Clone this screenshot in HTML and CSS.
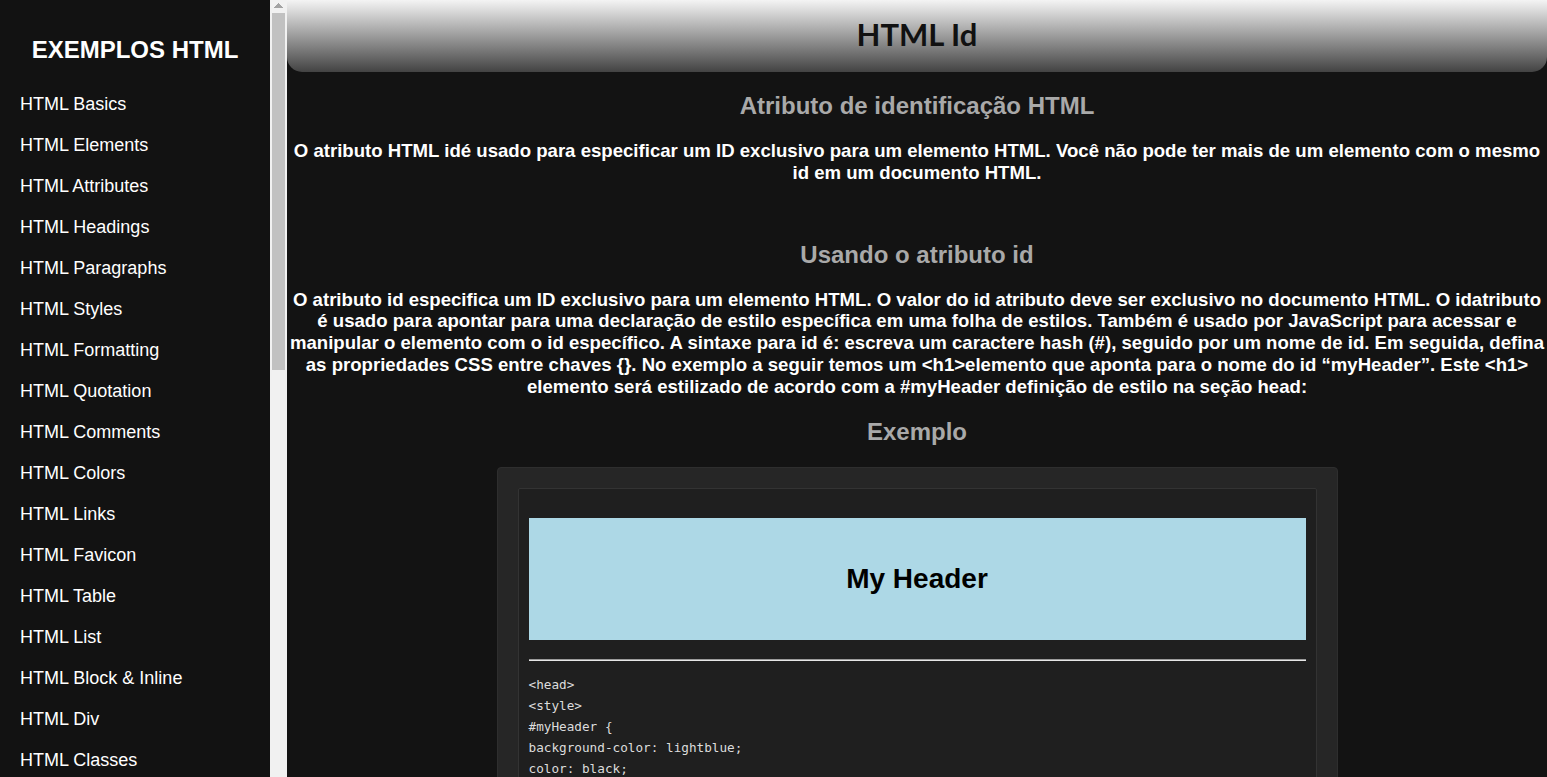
FILE: index.html
```html
<!DOCTYPE html>
<html lang="pt-BR">
<head>
<meta charset="utf-8">
<title>HTML Id</title>
<link rel="stylesheet" href="styles.css">
</head>
<body>
<aside class="sidebar">
  <nav class="side-nav">
    <h1 class="side-title">EXEMPLOS HTML</h1>
    <ul class="side-list">
      <li><a href="#">HTML Basics</a></li>
      <li><a href="#">HTML Elements</a></li>
      <li><a href="#">HTML Attributes</a></li>
      <li><a href="#">HTML Headings</a></li>
      <li><a href="#">HTML Paragraphs</a></li>
      <li><a href="#">HTML Styles</a></li>
      <li><a href="#">HTML Formatting</a></li>
      <li><a href="#">HTML Quotation</a></li>
      <li><a href="#">HTML Comments</a></li>
      <li><a href="#">HTML Colors</a></li>
      <li><a href="#">HTML Links</a></li>
      <li><a href="#">HTML Favicon</a></li>
      <li><a href="#">HTML Table</a></li>
      <li><a href="#">HTML List</a></li>
      <li><a href="#">HTML Block &amp; Inline</a></li>
      <li><a href="#">HTML Div</a></li>
      <li><a href="#">HTML Classes</a></li>
      <li><a href="#">HTML Id</a></li>
      <li><a href="#">HTML Iframes</a></li>
      <li><a href="#">HTML JavaScript</a></li>
    </ul>
  </nav>
  <div class="fake-scroll" aria-hidden="true">
    <div class="sb-arrow"></div>
    <div class="sb-thumb"></div>
  </div>
</aside>
<main class="content">
  <header class="page-header">
    <h1 class="page-title">HTML Id</h1>
  </header>
  <h2 class="sec-title">Atributo de identificação HTML</h2>
  <p class="text">O atributo HTML idé usado para especificar um ID exclusivo para um elemento HTML. Você não pode ter mais de um elemento com o mesmo id em um documento HTML.</p>
  <h2 class="sec-title sec-gap">Usando o atributo id</h2>
  <p class="text">O atributo id especifica um ID exclusivo para um elemento HTML. O valor do id atributo deve ser exclusivo no documento HTML. O idatributo é usado para apontar para uma declaração de estilo específica em uma folha de estilos. Também é usado por JavaScript para acessar e manipular o elemento com o id específico. A sintaxe para id é: escreva um caractere hash (#), seguido por um nome de id. Em seguida, defina as propriedades CSS entre chaves {}. No exemplo a seguir temos um &lt;h1&gt;elemento que aponta para o nome do id “myHeader”. Este &lt;h1&gt; elemento será estilizado de acordo com a #myHeader definição de estilo na seção head:</p>
  <h2 class="sec-title">Exemplo</h2>
  <div class="example">
    <div class="example-inner">
      <h1 class="my-header">My Header</h1>
      <hr class="divider">
      <pre class="code">&lt;head&gt;
&lt;style&gt;
#myHeader {
background-color: lightblue;
color: black;
padding: 40px;
text-align: center;
}
&lt;/style&gt;
&lt;/head&gt;</pre>
    </div>
  </div>
</main>
</body>
</html>
```
FILE: styles.css
```css
html, body {
  margin: 0;
  padding: 0;
  height: 100%;
}
body {
  display: flex;
  background: #131313;
  overflow: hidden;
  font-family: "Liberation Sans", Arial, sans-serif;
  color: #fff;
}
.sidebar {
  flex: 0 0 287px;
  display: flex;
  height: 100vh;
  background: #121212;
}
.side-nav {
  flex: 0 0 270px;
  width: 270px;
  overflow: hidden;
}
.fake-scroll {
  flex: 0 0 17px;
  display: flex;
  flex-direction: column;
  background: #f1f1f1;
}
.sb-arrow {
  height: 13px;
  background-image: conic-gradient(from 135deg at 50% 0, #a3a3a3 0 90deg, transparent 90deg);
  background-size: 9px 5px;
  background-repeat: no-repeat;
  background-position: 4px 3px;
}
.sb-thumb {
  height: 357px;
  margin: 0 2px;
  background: #c1c1c1;
}
.side-title {
  margin: 0;
  padding-top: 36px;
  font-size: 24px;
  font-weight: bold;
  text-align: center;
  color: #fff;
}
.side-list {
  list-style: none;
  margin: 20px 0 0;
  padding: 0;
}
.side-list li a {
  display: block;
  padding: 10px 20px;
  line-height: 21px;
  font-size: 18px;
  color: #fff;
  text-decoration: none;
}
.content {
  flex: 1 1 auto;
  min-width: 0;
  height: 100vh;
  overflow: hidden;
  text-align: center;
}
.page-header {
  height: 72px;
  display: flex;
  align-items: center;
  justify-content: center;
  background: linear-gradient(to bottom, #f4f4f4 0%, #c8c8c8 25%, #8a8a8a 60%, #434343 100%);
  border-radius: 0 0 15px 15px;
}
.page-title {
  margin: 0 0 4px;
  font-family: Lato, "Open Sans", sans-serif;
  font-weight: 700;
  font-size: 31px;
  color: #111;
}
.sec-title {
  margin: 20px 0;
  font-size: 24px;
  font-weight: bold;
  color: #a9a9a9;
}
.sec-gap {
  margin-top: 57px;
}
.text {
  margin: 19px 0;
  font-size: 18.6px;
  line-height: 21.8px;
  font-weight: bold;
  color: #fff;
}
.example {
  width: 841px;
  margin: 21px auto 0;
  box-sizing: border-box;
  padding: 20px;
  background: #262626;
  border: 1px solid #2e2e2e;
  border-radius: 4px;
  text-align: left;
}
.example-inner {
  padding: 10px;
  background: #1f1f1f;
  border: 1px solid #333;
  border-radius: 2px;
}
.my-header {
  margin: 19px 0;
  padding: 45px 0;
  background: lightblue;
  color: #000;
  font-size: 28px;
  font-weight: bold;
  text-align: center;
}
.divider {
  margin: 8px 0;
  height: 0;
  border: none;
  border-top: 1px solid #9a9a9a;
  border-bottom: 1px solid #e6e6e6;
}
.code {
  margin: 13px 0;
  font-family: "DejaVu Sans Mono", "Liberation Mono", monospace;
  font-size: 12.7px;
  line-height: 21px;
  color: #dcdcdc;
}
```
